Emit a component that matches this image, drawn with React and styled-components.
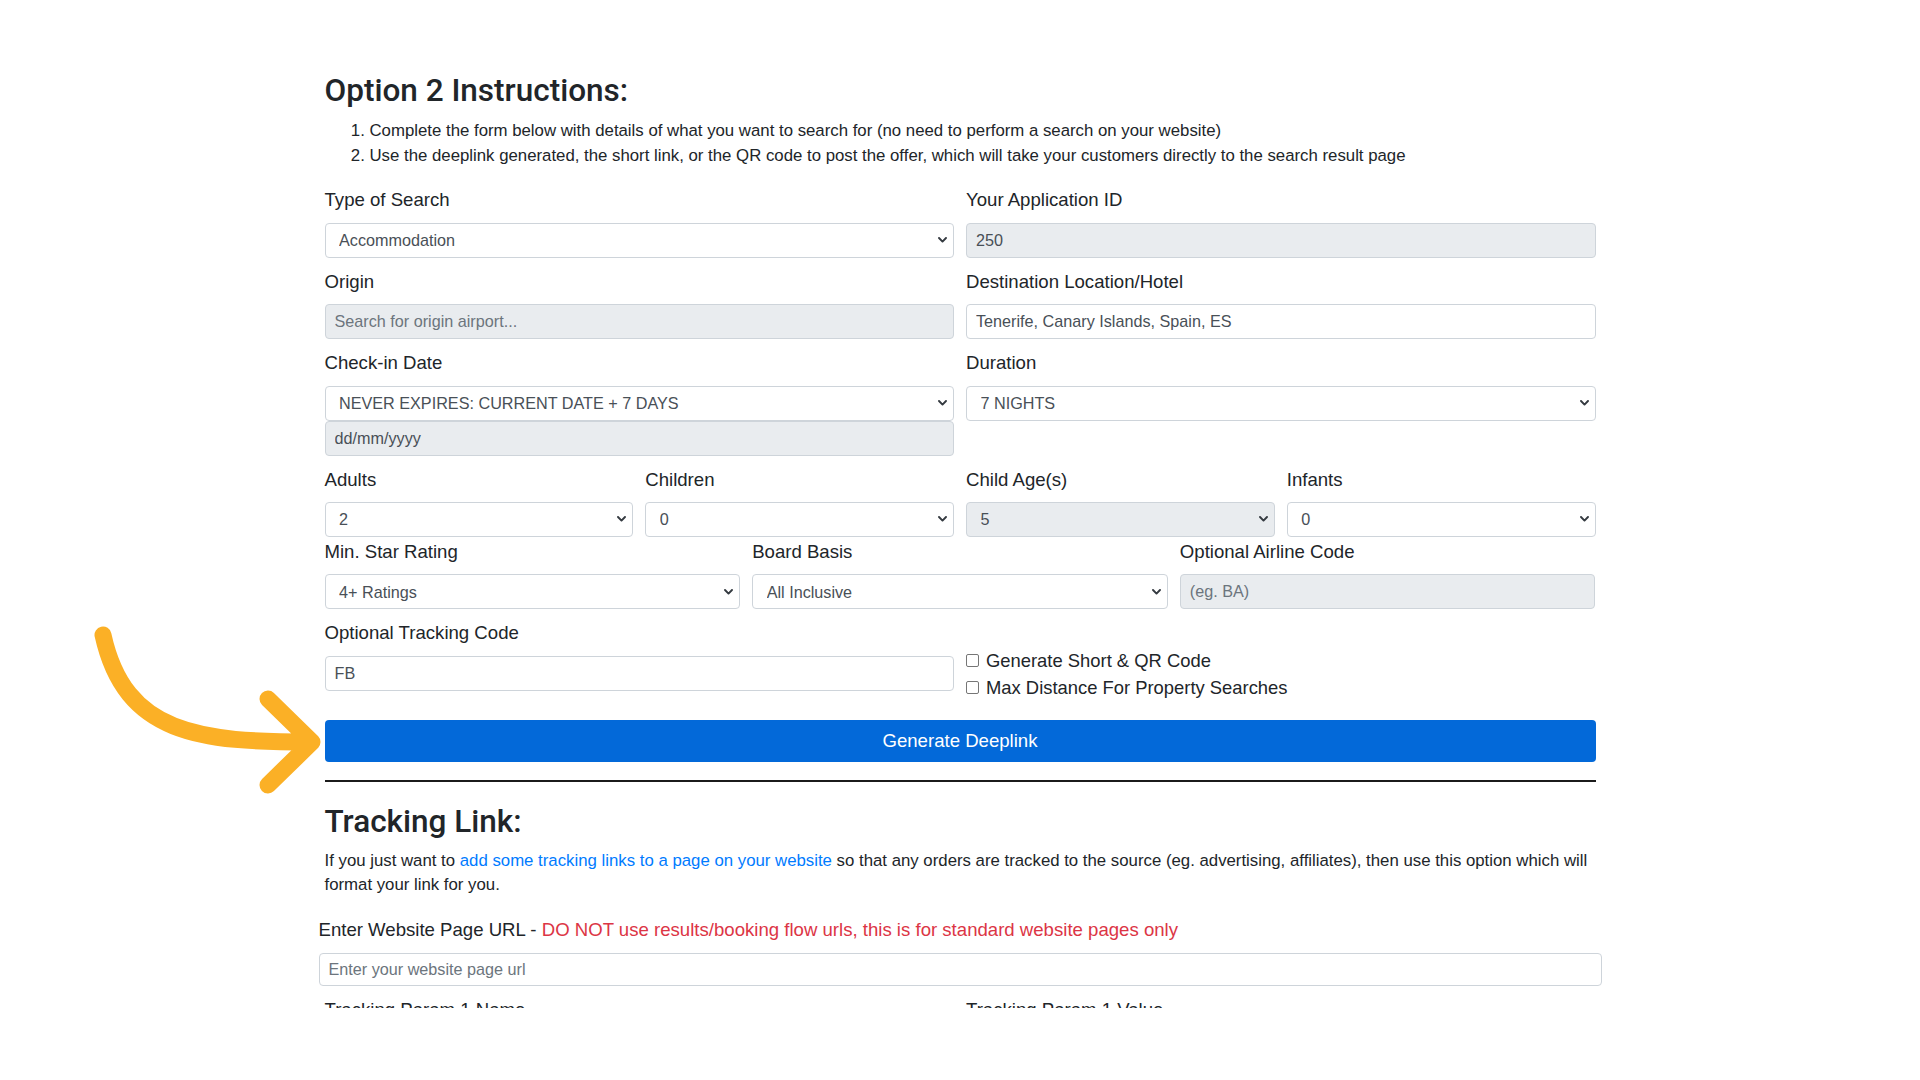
import React from "react";
import styled, { createGlobalStyle } from "styled-components";

const GlobalStyle = createGlobalStyle`
  html, body { margin: 0; padding: 0; background: #ffffff; }
  body { font-family: "Liberation Sans", Arial, sans-serif; color: #212529; }
  * { box-sizing: border-box; }
`;

const Page = styled.div`
  position: relative;
  width: 1920px;
  height: 1080px;
  overflow: hidden;
  background: #ffffff;
`;

const Viewport = styled.div`
  width: 100%;
  height: 1008px;
  overflow: hidden;
`;

const Container = styled.div`
  width: 1271px;
  margin: 0 auto;
  padding-top: 72px;
`;

const Title = styled.h3`
  margin: ${(p) => (p.$top ? `${p.$top}px` : "0")} 0 ${(p) => p.$bottom || 9}px;
  font-family: Roboto, "Liberation Sans", sans-serif;
  font-weight: 500;
  font-size: 31.5px;
  line-height: 38.4px;
  color: #212529;
`;

const Steps = styled.ol`
  margin: 0 0 18px;
  padding-left: 45px;
  font-size: 16.8px;
  line-height: 24.5px;
  color: #212529;
`;

const Row = styled.div`
  display: grid;
  grid-template-columns: repeat(${(p) => p.$cols || 2}, 1fr);
  column-gap: 12px;
`;

const Group = styled.div`
  margin-bottom: ${(p) => (p.$mb !== undefined ? p.$mb : 10)}px;
`;

const Label = styled.label`
  display: block;
  font-size: 18.6px;
  line-height: 27px;
  margin-bottom: 9.4px;
  color: #212529;
  white-space: nowrap;
`;

const Input = styled.input`
  display: block;
  width: 100%;
  height: ${(p) => p.$h || 35}px;
  padding: 0 9px;
  font-family: "Liberation Sans", Arial, sans-serif;
  font-size: 16.2px;
  color: #495057;
  background: ${(p) => (p.$muted ? "#e9ecef" : "#ffffff")};
  border: 1px solid #ced4da;
  border-radius: 4px;
  outline: none;
  opacity: 1;
  &::placeholder { color: #6c757d; opacity: 1; }
`;

const SelectWrap = styled.div`
  position: relative;
`;

const Select = styled.select`
  display: block;
  width: 100%;
  height: 35px;
  padding: 0 28px 0 13.5px;
  font-family: "Liberation Sans", Arial, sans-serif;
  font-size: 16.2px;
  color: #495057;
  background: ${(p) => (p.$muted ? "#e9ecef" : "#ffffff")};
  border: 1px solid #ced4da;
  border-radius: 4px;
  appearance: none;
  -webkit-appearance: none;
  outline: none;
  opacity: 1;
`;

const Chevron = styled.svg`
  position: absolute;
  right: 7px;
  top: 50%;
  margin-top: -3px;
  width: 9px;
  height: 6px;
  pointer-events: none;
`;

const Dropdown = ({ value, muted }) => (
  <SelectWrap>
    <Select defaultValue={value} $muted={muted}>
      <option value={value}>{value}</option>
    </Select>
    <Chevron viewBox="0 0 9 6">
      <polyline points="1,1 4.5,4.6 8,1" fill="none" stroke="#343a40" strokeWidth="1.9" strokeLinecap="round" strokeLinejoin="round" />
    </Chevron>
  </SelectWrap>
);

const Checks = styled.div`
  padding-top: 27.4px;
`;

const CheckLine = styled.label`
  display: flex;
  align-items: center;
  gap: 7px;
  font-size: 18.4px;
  line-height: 27px;
  color: #212529;
`;

const Box = styled.span`
  width: 13px;
  height: 13px;
  border: 1px solid #767676;
  border-radius: 2px;
  background: #ffffff;
  flex: none;
`;

const PrimaryButton = styled.button`
  display: block;
  width: 100%;
  height: 42px;
  margin-top: 19.5px;
  border: none;
  border-radius: 4px;
  background: #0369d9;
  color: #ffffff;
  font-family: "Liberation Sans", Arial, sans-serif;
  font-size: 18.6px;
  cursor: pointer;
`;

const Rule = styled.div`
  height: 2px;
  margin-top: 18px;
  background: #1b1b1b;
`;

const Para = styled.p`
  margin: 0 0 18.3px;
  font-size: 16.8px;
  line-height: 24.5px;
  color: #212529;
`;

const TextLink = styled.a`
  color: #007bff;
  text-decoration: none;
`;

const Danger = styled.span`
  color: #dc3545;
`;

const Wide = styled.div`
  margin: 0 -6px;
`;

const Arrow = styled.svg`
  position: absolute;
  left: 0;
  top: 0;
  width: 400px;
  height: 900px;
  pointer-events: none;
`;

export default function App() {
  return (
    <Page>
      <GlobalStyle />
      <Viewport>
        <Container>
          <Title>Option 2 Instructions:</Title>
          <Steps>
            <li>Complete the form below with details of what you want to search for (no need to perform a search on your website)</li>
            <li>Use the deeplink generated, the short link, or the QR code to post the offer, which will take your customers directly to the search result page</li>
          </Steps>

          <Row $cols={2}>
            <Group>
              <Label>Type of Search</Label>
              <Dropdown value="Accommodation" />
            </Group>
            <Group>
              <Label>Your Application ID</Label>
              <Input $muted readOnly defaultValue="250" />
            </Group>
          </Row>

          <Row $cols={2}>
            <Group>
              <Label>Origin</Label>
              <Input $muted readOnly placeholder="Search for origin airport..." />
            </Group>
            <Group>
              <Label>Destination Location/Hotel</Label>
              <Input readOnly defaultValue="Tenerife, Canary Islands, Spain, ES" />
            </Group>
          </Row>

          <Row $cols={2}>
            <Group>
              <Label>Check-in Date</Label>
              <Dropdown value="NEVER EXPIRES: CURRENT DATE + 7 DAYS" />
              <Input $muted readOnly defaultValue="dd/mm/yyyy" />
            </Group>
            <Group>
              <Label>Duration</Label>
              <Dropdown value="7 NIGHTS" />
            </Group>
          </Row>

          <Row $cols={4}>
            <Group $mb={1}>
              <Label>Adults</Label>
              <Dropdown value="2" />
            </Group>
            <Group $mb={1}>
              <Label>Children</Label>
              <Dropdown value="0" />
            </Group>
            <Group $mb={1}>
              <Label>Child Age(s)</Label>
              <Dropdown value="5" muted />
            </Group>
            <Group $mb={1}>
              <Label>Infants</Label>
              <Dropdown value="0" />
            </Group>
          </Row>

          <Row $cols={3}>
            <Group>
              <Label>Min. Star Rating</Label>
              <Dropdown value="4+ Ratings" />
            </Group>
            <Group>
              <Label>Board Basis</Label>
              <Dropdown value="All Inclusive" />
            </Group>
            <Group>
              <Label>Optional Airline Code</Label>
              <Input $muted readOnly placeholder="(eg. BA)" />
            </Group>
          </Row>

          <Row $cols={2}>
            <Group>
              <Label>Optional Tracking Code</Label>
              <Input readOnly defaultValue="FB" />
            </Group>
            <Checks>
              <CheckLine><Box />Generate Short &amp; QR Code</CheckLine>
              <CheckLine><Box />Max Distance For Property Searches</CheckLine>
            </Checks>
          </Row>

          <PrimaryButton>Generate Deeplink</PrimaryButton>
          <Rule />

          <Title $top={20.4} $bottom={7.8}>Tracking Link:</Title>
          <Para>
            If you just want to <TextLink href="#">add some tracking links to a page on your website</TextLink> so that any orders are tracked to the source (eg. advertising, affiliates), then use this option which will format your link for you.
          </Para>

          <Wide>
            <Group>
              <Label>
                Enter Website Page URL - <Danger>DO NOT use results/booking flow urls, this is for standard website pages only</Danger>
              </Label>
              <Input $h={33} placeholder="Enter your website page url" />
            </Group>
          </Wide>
          <Row $cols={2}>
            <Label>Tracking Param 1 Name</Label>
            <Label>Tracking Param 1 Value</Label>
          </Row>
        </Container>
      </Viewport>

      <Arrow viewBox="0 0 400 900">
        <path
          d="M103,635 C125,735 200,742 312,742 M268,699 L312,742 L268,785"
          fill="none"
          stroke="#fbb026"
          strokeWidth="17"
          strokeLinecap="round"
          strokeLinejoin="round"
        />
      </Arrow>
    </Page>
  );
}
